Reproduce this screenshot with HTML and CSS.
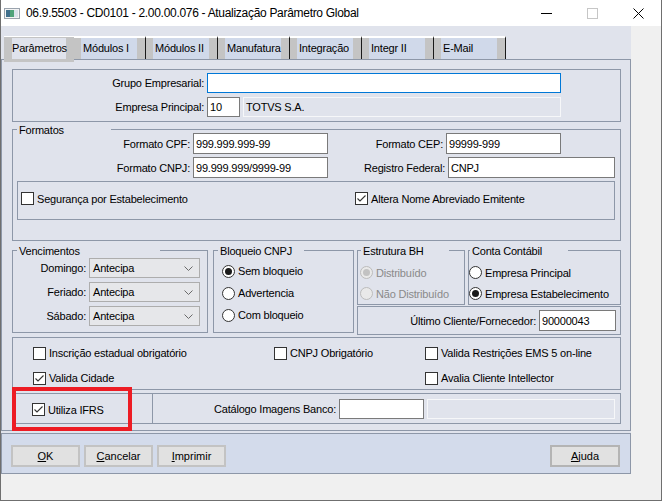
FILE: index.html
```html
<!DOCTYPE html>
<html lang="pt-BR">
<head>
    <meta charset="UTF-8">
    <meta name="viewport" content="width=device-width, initial-scale=1.0">
    <title>Atualização Parâmetro Global</title>
    <link rel="stylesheet" href="styles.css">
</head>
<body>
<div class="window">
    <div class="titlebar">
        <svg class="app-icon" width="16" height="11" viewBox="0 0 16 11">
            <rect x="0.5" y="0.5" width="15" height="10" fill="#f4f4f4" stroke="#9aa3ad"/>
            <rect x="2" y="2" width="4" height="7" fill="#3f6f8c"/>
            <rect x="6" y="2" width="4" height="7" fill="#4fa37a"/>
            <rect x="10" y="2" width="4" height="7" fill="#d9e2ea"/>
        </svg>
        <span class="title">06.9.5503 - CD0101 - 2.00.00.076 - Atualização Parâmetro Global</span>
        <div class="caption">
            <span class="cap-btn">
                <svg width="11" height="11" viewBox="0 0 11 11"><path d="M0 5.5H11" stroke="#000" stroke-width="1"/></svg>
            </span>
            <span class="cap-btn">
                <svg width="11" height="11" viewBox="0 0 11 11"><rect x="0.5" y="0.5" width="10" height="10" fill="none" stroke="#c6c6c6"/></svg>
            </span>
            <span class="cap-btn">
                <svg width="11" height="11" viewBox="0 0 11 11"><path d="M0.5 0.5L10.5 10.5M10.5 0.5L0.5 10.5" stroke="#000" stroke-width="1"/></svg>
            </span>
        </div>
    </div>

    <div class="client">
        <div class="main">
            <div class="tabs">
                <div class="tab active"><span>Parâmetros</span></div>
                <div class="tab">Módulos I</div>
                <div class="tab">Módulos II</div>
                <div class="tab">Manufatura</div>
                <div class="tab">Integração</div>
                <div class="tab">Integr II</div>
                <div class="tab">E-Mail</div>
            </div>

            <div class="panel">
                <!-- empresa -->
                <div class="group company">
                    <div class="row">
                        <span class="lbl company-lbl">Grupo Empresarial:</span>
                        <span class="field focused w-grupo"></span>
                    </div>
                    <div class="row">
                        <span class="lbl company-lbl">Empresa Principal:</span>
                        <span class="field w-code">10</span>
                        <span class="field readonly w-name">TOTVS S.A.</span>
                    </div>
                </div>

                <!-- formatos -->
                <div class="group formats">
                    <div class="legend legend-formats">Formatos</div>
                    <div class="row fmt-row">
                        <span class="lbl fmt-lbl">Formato CPF:</span>
                        <span class="field fmt-input">999.999.999-99</span>
                        <span class="lbl cep-lbl">Formato CEP:</span>
                        <span class="field cep-input">99999-999</span>
                    </div>
                    <div class="row fmt-row">
                        <span class="lbl fmt-lbl">Formato CNPJ:</span>
                        <span class="field fmt-input">99.999.999/9999-99</span>
                        <span class="lbl reg-lbl">Registro Federal:</span>
                        <span class="field reg-input">CNPJ</span>
                    </div>
                    <div class="sub-box">
                        <span class="check seg-check"><span class="box"></span>Segurança por Estabelecimento</span>
                        <span class="check"><span class="box"><svg width="11" height="11" viewBox="0 0 11 11"><path d="M1.5 5.5L4 8L9.5 2.5" fill="none" stroke="#333" stroke-width="1.1"/></svg></span>Altera Nome Abreviado Emitente</span>
                    </div>
                </div>

                <div class="mid">
                    <!-- vencimentos -->
                    <div class="group venc">
                        <div class="legend legend-venc">Vencimentos</div>
                        <div class="venc-body">
                            <div class="row venc-row">
                                <span class="lbl venc-lbl">Domingo:</span>
                                <span class="combo">Antecipa<svg class="chev" width="9" height="5" viewBox="0 0 9 5"><path d="M0.5 0.5L4.5 4.5L8.5 0.5" fill="none" stroke="#6a6a6a"/></svg></span>
                            </div>
                            <div class="row venc-row">
                                <span class="lbl venc-lbl">Feriado:</span>
                                <span class="combo">Antecipa<svg class="chev" width="9" height="5" viewBox="0 0 9 5"><path d="M0.5 0.5L4.5 4.5L8.5 0.5" fill="none" stroke="#6a6a6a"/></svg></span>
                            </div>
                            <div class="row venc-row">
                                <span class="lbl venc-lbl">Sábado:</span>
                                <span class="combo">Antecipa<svg class="chev" width="9" height="5" viewBox="0 0 9 5"><path d="M0.5 0.5L4.5 4.5L8.5 0.5" fill="none" stroke="#6a6a6a"/></svg></span>
                            </div>
                        </div>
                    </div>

                    <!-- bloqueio -->
                    <div class="group bloq">
                        <div class="legend legend-bloq">Bloqueio CNPJ</div>
                        <div class="bloq-body">
                            <span class="opt"><span class="radio on"></span>Sem bloqueio</span>
                            <span class="opt"><span class="radio"></span>Advertencia</span>
                            <span class="opt"><span class="radio"></span>Com bloqueio</span>
                        </div>
                    </div>

                    <div class="right-col">
                        <div class="bh-row">
                            <div class="group bh">
                                <div class="legend legend-bh">Estrutura BH</div>
                                <div class="bh-body">
                                    <span class="opt disabled"><span class="radio on"></span>Distribuído</span>
                                    <span class="opt disabled"><span class="radio"></span>Não Distribuído</span>
                                </div>
                            </div>
                            <div class="group conta">
                                <div class="legend legend-conta">Conta Contábil</div>
                                <div class="conta-body">
                                    <span class="opt"><span class="radio"></span>Empresa Principal</span>
                                    <span class="opt"><span class="radio on"></span>Empresa Estabelecimento</span>
                                </div>
                            </div>
                        </div>
                        <div class="group last-box">
                            <span class="lbl">Último Cliente/Fornecedor:</span>
                            <span class="field last-input">90000043</span>
                        </div>
                    </div>
                </div>

                <!-- opcoes -->
                <div class="group opts">
                    <span class="check"><span class="box"></span>Inscrição estadual obrigatório</span>
                    <span class="check"><span class="box"></span>CNPJ Obrigatório</span>
                    <span class="check"><span class="box"></span>Valida Restrições EMS 5 on-line</span>
                    <span class="check"><span class="box"><svg width="11" height="11" viewBox="0 0 11 11"><path d="M1.5 5.5L4 8L9.5 2.5" fill="none" stroke="#333" stroke-width="1.1"/></svg></span>Valida Cidade</span>
                    <span></span>
                    <span class="check"><span class="box"></span>Avalia Cliente Intellector</span>
                </div>

                <div class="ifrs-row">
                    <div class="group ifrs-box">
                        <span class="check"><span class="box"><svg width="11" height="11" viewBox="0 0 11 11"><path d="M1.5 5.5L4 8L9.5 2.5" fill="none" stroke="#333" stroke-width="1.1"/></svg></span>Utiliza IFRS</span>
                    </div>
                    <div class="group catalog-box">
                        <span class="lbl">Catálogo Imagens Banco:</span>
                        <span class="field catalog-input"></span>
                        <span class="field readonly catalog-name"></span>
                    </div>
                </div>

                <div class="highlight"></div>
            </div>

            <div class="buttonbar">
                <button class="btn"><u>O</u>K</button>
                <button class="btn"><u>C</u>ancelar</button>
                <button class="btn"><u>I</u>mprimir</button>
                <button class="btn help"><u>A</u>juda</button>
            </div>
        </div>
    </div>
</div>
</body>
</html>
```

FILE: styles.css
```css
body {
    margin: 0;
    font-family: "Liberation Sans", Arial, sans-serif;
    font-size: 11px;
    letter-spacing: -0.2px;
    color: #000;
    background: #fff;
}
.window {
    width: 662px;
    height: 501px;
    box-sizing: border-box;
    border: 1px solid #6f6f6f;
    border-top: none;
    display: flex;
    flex-direction: column;
}

/* title bar */
.titlebar {
    height: 26px;
    flex: none;
    display: flex;
    align-items: center;
    background: #fff;
}
.app-icon {
    margin-left: 3px;
}
.title {
    margin-left: 6px;
    font-size: 12px;
    letter-spacing: -0.3px;
    white-space: nowrap;
}
.caption {
    margin-left: auto;
    display: flex;
    height: 100%;
}
.cap-btn {
    width: 46px;
    display: flex;
    align-items: center;
    justify-content: center;
}

/* client area */
.client {
    flex: 1;
    background: #f0f0f0;
    display: flex;
}
.main {
    width: 630px;
    height: 448px;
    box-sizing: border-box;
    padding-top: 10px;
    background: #e0e3ec;
}

/* tabs */
.tabs {
    display: flex;
    height: 23px;
    padding-left: 3px;
}
.tab {
    width: 72px;
    height: 23px;
    box-sizing: border-box;
    border-top: 2px solid #fff;
    border-right: 1px solid #1a1a1a;
    background: linear-gradient(to right, #c4c4c4 0 7px, #d0d9ea 7px calc(100% - 8px), #c4c4c4 calc(100% - 8px));
    padding-left: 9px;
    line-height: 21px;
    white-space: nowrap;
}
.tab.active {
    width: 70px;
    height: 26px;
    border: none;
    border-top: 1px solid #fff;
    padding: 1px 8px 3px;
    background: #c4c4c4;
    position: relative;
    z-index: 1;
}
.tab.active span {
    display: block;
    height: 21px;
    background: #e0e3ec;
    overflow: visible;
}

/* main panel */
.panel {
    height: 372px;
    box-sizing: border-box;
    border: 1px solid #8d97a8;
    padding: 9px 9px 0 10px;
    position: relative;
}
.group {
    border: 1px solid #8d97a8;
    box-sizing: border-box;
}
.legend {
    box-sizing: border-box;
    margin: -6px 0 -4px 4px;
    padding: 0 0 0 2px;
    line-height: 13px;
    background: #e0e3ec;
    white-space: nowrap;
}
.legend-formats { width: 94px; }
.legend-venc { width: 143px; }
.legend-bloq { width: 86px; }
.legend-bh { width: 88px; margin-left: 3px; }
.legend-conta { width: 98px; margin-left: 1px; }

.row {
    display: flex;
    align-items: center;
    gap: 3px;
    height: 20px;
}
.lbl {
    flex: none;
    text-align: right;
    white-space: nowrap;
}
.field {
    flex: none;
    box-sizing: border-box;
    height: 100%;
    border: 1px solid #7a7a7a;
    background: #fff;
    padding: 0 2px;
    display: flex;
    align-items: center;
    white-space: nowrap;
}
.field.focused {
    border-color: #0078d7;
}
.field.readonly {
    background: #e0e3ec;
    border-color: #f6f7f9;
}

/* empresa */
.company {
    padding: 3px 0 4px;
    display: flex;
    flex-direction: column;
    gap: 4px;
}
.company-lbl { width: 191px; }
.w-grupo { width: 354px; }
.w-code { width: 33px; }
.w-name { width: 318px; }

/* formatos */
.formats {
    margin-top: 7px;
    padding-bottom: 20px;
}
.fmt-row {
    height: 21px;
}
.fmt-row + .fmt-row {
    margin-top: 3px;
}
.fmt-lbl { width: 177px; }
.fmt-input { width: 135px; }
.cep-lbl { width: 112px; }
.cep-input { width: 115px; }
.reg-lbl { width: 114px; }
.reg-input { width: 167px; }
.sub-box {
    margin: 3px 5px 0 4px;
    border: 1px solid #8d97a8;
    padding: 10px 0 14px 3px;
    display: flex;
    align-items: center;
}
.seg-check {
    width: 334px;
}

/* checks and radios */
.check {
    display: flex;
    align-items: center;
    gap: 3px;
    white-space: nowrap;
}
.box {
    width: 13px;
    height: 13px;
    box-sizing: border-box;
    border: 1px solid #333;
    background: #fff;
    display: flex;
    align-items: center;
    justify-content: center;
    flex: none;
}
.opt {
    display: flex;
    align-items: center;
    gap: 3px;
    white-space: nowrap;
}
.radio {
    width: 13px;
    height: 13px;
    box-sizing: border-box;
    border: 1px solid #333;
    border-radius: 50%;
    background: #fff;
    display: flex;
    align-items: center;
    justify-content: center;
    flex: none;
}
.radio.on::after {
    content: "";
    width: 7px;
    height: 7px;
    border-radius: 50%;
    background: #1a1a1a;
}
.opt.disabled {
    color: #8a8a8a;
}
.opt.disabled .radio {
    border-color: #bcbcbc;
    background: #e9e9e9;
}
.opt.disabled .radio.on::after {
    background: #c2c2c2;
}

/* middle row */
.mid {
    display: flex;
    align-items: flex-start;
    margin-top: 9px;
}
.venc {
    width: 196px;
}
.venc-body {
    padding: 4px 0 6px;
    display: flex;
    flex-direction: column;
    gap: 4px;
}
.venc-lbl { width: 73px; }
.combo {
    box-sizing: border-box;
    width: 111px;
    height: 20px;
    border: 1px solid #adadad;
    background: #e6e7ea;
    padding: 0 0 0 3px;
    display: flex;
    align-items: center;
}
.chev {
    margin-left: auto;
    margin-right: 6px;
}
.bloq {
    width: 141px;
    margin-left: 5px;
}
.bloq-body {
    padding: 6px 0 6px 8px;
}
.bloq-body .opt {
    height: 22px;
}
.right-col {
    width: 264px;
    margin-left: 3px;
    display: flex;
    flex-direction: column;
}
.bh-row {
    display: flex;
    gap: 3px;
}
.bh {
    width: 108px;
}
.conta {
    width: 153px;
}
.bh-body {
    padding: 8px 0 0 2px;
}
.conta-body {
    padding: 8px 0 0 0;
}
.bh-body .opt,
.conta-body .opt {
    height: 21px;
}
.last-box {
    margin-top: 1px;
    padding: 3px 4px 3px 0;
    display: flex;
    justify-content: flex-end;
    align-items: center;
    gap: 3px;
}
.last-input {
    width: 77px;
    height: 21px;
}

/* options */
.opts {
    margin-top: 2px;
    padding: 7px 0 3px 20px;
    display: grid;
    grid-template-columns: 241px 151px 1fr;
    grid-auto-rows: 16px;
    row-gap: 9px;
}

.ifrs-row {
    display: flex;
    height: 31px;
    margin-top: 3px;
}
.ifrs-box {
    width: 141px;
    padding: 2px 0 0 19px;
    display: flex;
    align-items: center;
}
.catalog-box {
    flex: 1;
    border-left: none;
    padding-right: 5px;
    display: flex;
    align-items: center;
    justify-content: flex-end;
    gap: 3px;
}
.catalog-input {
    width: 85px;
    height: 20px;
}
.catalog-name {
    width: 188px;
    height: 20px;
}

.highlight {
    position: absolute;
    left: 10px;
    top: 327px;
    width: 120px;
    height: 44px;
    box-sizing: border-box;
    border: 4px solid #ed1c24;
    pointer-events: none;
}

/* buttons */
.buttonbar {
    margin-top: 2px;
    height: 41px;
    box-sizing: border-box;
    border: 1px solid #8d97a8;
    background: #d3dbeb;
    padding: 11px 10px 0 9px;
    display: flex;
    gap: 4px;
}
.btn {
    width: 69px;
    height: 22px;
    box-sizing: border-box;
    border: 2px solid #c3c3c3;
    background: #e1e1e1;
    font: inherit;
    color: #000;
    padding: 0;
}
.btn.help {
    width: 70px;
    margin-left: auto;
    border-color: #b4b4b4;
}
```
